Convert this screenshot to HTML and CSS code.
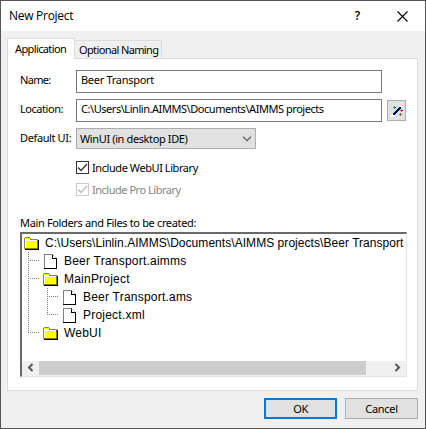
FILE: index.html
```
<!DOCTYPE html>
<html lang="en">
<head>
<meta charset="utf-8">
<title>New Project</title>
<link rel="stylesheet" href="styles.css">
</head>
<body>
<svg class="defs" width="0" height="0" aria-hidden="true">
  <symbol id="folder" viewBox="0 0 15 13" shape-rendering="crispEdges">
    <path fill="#000" d="M1 12h13V3h1v10H1z"/>
    <path fill="#808080" d="M0 1h1V0h5v1h1v1h7v10H0z"/>
    <path fill="#ff0" d="M2 4h11v7H2zM1 1h5v1H1z"/>
    <path fill="#fff" d="M1 2h5v1h7v1H2v7H1z"/>
    <path fill="#808000" d="M1 11h12V3h1v9H1z"/>
  </symbol>
  <symbol id="file" viewBox="0 0 13 15" shape-rendering="crispEdges">
    <path fill="#808080" d="M0 0h9v1H1v13H0z"/>
    <path fill="#fff" d="M1 1h7v4h4v9H1z"/>
    <path fill="#c0c0c0" d="M9 1h1v1h1v1h1v1h-1V3h-1V2H9z"/>
    <path fill="#000" d="M8 1h1v3h4v11H0v-1h12V5H8z"/>
  </symbol>
</svg>
<div class="dialog">
  <header class="titlebar">
    <span class="title">New Project</span>
    <span class="help">?</span>
    <svg class="close" width="11" height="11" viewBox="0 0 11 11"><path d="M.5.5l10 10M10.500.5l-10 10" stroke="#000" stroke-width="1.1" fill="none"/></svg>
  </header>
  <nav class="tabs">
    <span class="tab active">Application</span>
    <span class="tab">Optional Naming</span>
  </nav>
  <main class="panel">
    <div class="field"><span class="label l-name">Name:</span><div class="input"><span class="t-name">Beer Transport</span></div></div>
    <div class="field"><span class="label l-loc">Location:</span><div class="input"><span class="t-loc">C:\Users\Linlin.AIMMS\Documents\AIMMS projects</span></div>
      <div class="wand"><svg width="17" height="17" viewBox="0 0 17 17" shape-rendering="crispEdges">
        <path fill="#fff" d="M3 13h3v2H3zM12 4h2v2h-2zM4 12h1v1H4z"/>
        <path fill="#000050" d="M5 11h1v-1h1V9h1V8h1V7h1V6h1V5h2v2h-1v1h-1v1h-1v1H9v1H8v1H7v1H5z"/>
        <path fill="#808080" d="M5 5h3v1H5zM6 4h1v3H6zM12 8h3v1h-3zM13 7h1v3h-1zM11 12h3v1h-3zM12 11h1v3h-1z"/>
        <path fill="#f00" d="M6 5h2v1H6zM13 8h2v1h-2zM12 12h1v1h-1z"/>
      </svg></div>
    </div>
    <div class="field"><span class="label l-ui">Default UI:</span><div class="select"><span class="t-ui">WinUI (in desktop IDE)</span><svg width="10" height="6" viewBox="0 0 10 6"><path d="M1 .7l4 4 4-4" fill="none" stroke="#555" stroke-width="1.2"/></svg></div></div>
    <div class="check"><span class="box"><svg width="11" height="11" viewBox="0 0 11 11"><path d="M1 5.500l3 3 6-6.500" fill="none" stroke="#333" stroke-width="1.3"/></svg></span><span class="t-web">Include WebUI Library</span></div>
    <div class="check disabled"><span class="box"><svg width="11" height="11" viewBox="0 0 11 11"><path d="M1 5.500l3 3 6-6.500" fill="none" stroke="#bbb" stroke-width="1.3"/></svg></span><span class="t-pro">Include Pro Library</span></div>
    <div class="caption"><span class="t-cap">Main Folders and Files to be created:</span></div>
    <div class="tree">
      <div class="view">
        <div class="node"><svg class="folder"><use href="#folder"/></svg><span class="t-root">C:\Users\Linlin.AIMMS\Documents\AIMMS projects\Beer Transport</span></div>
        <ul>
          <li><div class="node"><svg class="file"><use href="#file"/></svg><span>Beer Transport.aimms</span></div></li>
          <li><div class="node"><svg class="folder"><use href="#folder"/></svg><span>MainProject</span></div>
            <ul>
              <li><div class="node"><svg class="file"><use href="#file"/></svg><span>Beer Transport.ams</span></div></li>
              <li><div class="node"><svg class="file"><use href="#file"/></svg><span>Project.xml</span></div></li>
            </ul>
          </li>
          <li><div class="node"><svg class="folder"><use href="#folder"/></svg><span>WebUI</span></div></li>
        </ul>
      </div>
      <div class="scrollbar">
        <svg width="17" height="14" viewBox="0 0 17 14"><path d="M10.500 3L7 6.500l3.500 3.500" fill="none" stroke="#555" stroke-width="2"/></svg>
        <div class="thumb"></div>
        <svg width="17" height="14" viewBox="0 0 17 14"><path d="M6.500 3L10 6.500 6.500 10" fill="none" stroke="#555" stroke-width="2"/></svg>
      </div>
    </div>
  </main>
  <footer class="actions"><div class="btn primary">OK</div><div class="btn"><span class="t-cancel">Cancel</span></div></footer>
</div>
</body>
</html>
```
FILE: styles.css
```
* { box-sizing: border-box; }
body { margin: 0; }
.defs { display: block; position: absolute; }
.dialog {
  width: 426px; height: 429px; border: 1px solid #555; background: #f0f0f0;
  display: flex; flex-direction: column; overflow: hidden;
  font: 11px/14px "Noto Sans", "Open Sans", sans-serif; letter-spacing: -0.35px;
  color: #000; white-space: nowrap;
}
.titlebar { height: 30px; flex: none; background: #fff; display: flex; align-items: center; padding: 0 17px 0 8px; font: 12px/16px "Open Sans", sans-serif; letter-spacing: -0.28px; }
.title { flex: 1; }
.help { margin-right: 37px; font-weight: 600; }
.tabs { height: 27px; flex: none; display: flex; align-items: flex-end; padding-left: 6px; letter-spacing: -0.62px; }
.tab { height: 18px; width: 87px; border: 1px solid #dcdcdc; border-width: 1px 1px 0 0; padding: 2px 0 0 4px; }
.tab.active { height: 21px; width: 68px; margin-bottom: -1px; background: #fff; border-width: 1px 1px 0 1px; padding: 3px 0 0 7px; position: relative; z-index: 1; }
.panel { width: 411px; height: 333px; flex: none; margin-left: 6px; border: 1px solid #dcdcdc; background: #fff; padding: 11px 0 0 12px; }
.field { display: flex; height: 23px; margin-bottom: 6px; }
.label { width: 56px; flex: none; padding-top: 3px; }
.l-name { letter-spacing: -0.7px; }
.l-loc, .t-loc { letter-spacing: -0.45px; }
.l-ui, .t-ui { letter-spacing: -0.38px; }
.t-name, .t-cancel { letter-spacing: -0.29px; }
.t-web { letter-spacing: -0.43px; }
.t-pro { letter-spacing: -0.48px; }
.input { width: 306px; border: 1px solid #7a7a7a; padding: 2px 0 0 4px; }
.wand { width: 19px; height: 21px; margin: 1px 0 0 5px; border: 1px solid #adadad; background: #e1e1e1; padding-top: 1px; }
.wand svg, .scrollbar svg, .box svg { display: block; flex: none; }
.select { width: 180px; height: 21px; border: 1px solid #adadad; background: #e1e1e1; display: flex; align-items: center; justify-content: space-between; padding: 1px 3px 0 3px; }
.check { display: flex; height: 13px; margin: 10px 0 9px 56px; align-items: center; gap: 3px; }
.box { width: 13px; height: 13px; border: 1px solid #333; flex: none; }
.disabled { color: #838383; margin-top: 9px; }
.disabled .box { border-color: #ccc; }
.caption { margin-top: 20px; height: 16px; }
.tree { width: 387px; height: 145px; border: solid; border-width: 2px 1px 1px 2px; border-color: #696969 #e3e3e3 #e3e3e3 #696969; }
.view { height: 127px; padding: 0 0 0 2px; overflow: hidden; font: 12px/18px "Liberation Sans", Arial, sans-serif; letter-spacing: 0.05px; }
.view ul { list-style: none; margin: 0; padding: 0 0 0 19px; }
.view li { position: relative; }
.view li .node span { letter-spacing: 0.22px; }
.node { display: flex; height: 18px; align-items: center; gap: 6px; }
.folder { width: 15px; height: 13px; flex: none; }
.file { width: 13px; height: 15px; flex: none; margin-left: 1px; margin-right: 1px; }
.view li::before { content: ""; position: absolute; left: -15px; top: 0; bottom: 0; width: 1px; background: repeating-linear-gradient(#808080 0 1px, #fff 1px 2px); }
.view li:last-child::before { bottom: auto; height: 9px; }
.view li::after { content: ""; position: absolute; left: -15px; top: 8px; width: 12px; height: 1px; background: repeating-linear-gradient(90deg, #808080 0 1px, #fff 1px 2px); }
.scrollbar { height: 15px; background: #f0f0f0; display: flex; }
.thumb { width: 327px; height: 14px; background: #cdcdcd; margin-right: 23px; }
.actions { display: flex; gap: 8px; justify-content: flex-end; padding: 7px 7px 0 0; }
.btn { width: 73px; height: 21px; border: 1px solid #adadad; background: #e1e1e1; text-align: center; line-height: 20px; }
.btn.primary { border: 2px solid #0078d7; line-height: 18px; }
```
